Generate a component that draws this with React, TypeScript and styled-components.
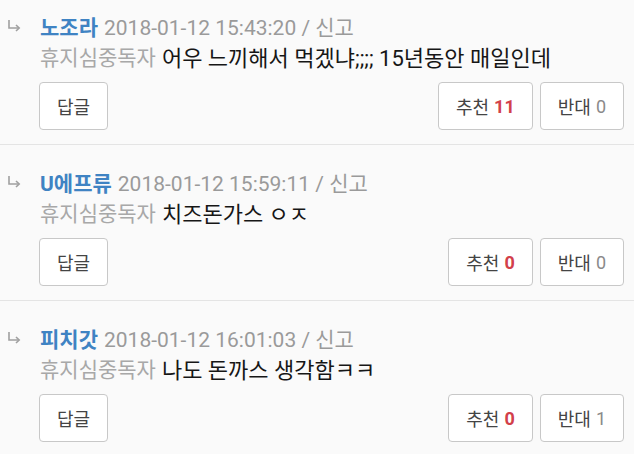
import React from 'react';
import styled, { createGlobalStyle } from 'styled-components';

type Comment = {
  id: number;
  nick: string;
  date: string;
  level: string;
  body: string;
  up: number;
  down: number;
};

const comments: Comment[] = [
  { id: 1, nick: '노조라', date: '2018-01-12 15:43:20', level: '휴지심중독자', body: '어우 느끼해서 먹겠냐;;;; 15년동안 매일인데', up: 11, down: 0 },
  { id: 2, nick: 'U에프류', date: '2018-01-12 15:59:11', level: '휴지심중독자', body: '치즈돈가스 ㅇㅈ', up: 0, down: 0 },
  { id: 3, nick: '피치갓', date: '2018-01-12 16:01:03', level: '휴지심중독자', body: '나도 돈까스 생각함ㅋㅋ', up: 0, down: 1 },
];

const GlobalStyle = createGlobalStyle`
  html, body {
    margin: 0;
    padding: 0;
    background: #fafafa;
    overflow: hidden;
  }
  body {
    font-family: Roboto, "Noto Sans CJK KR", "Noto Sans", sans-serif;
  }
`;

const List = styled.div`
  margin-top: -11px;
`;

const Item = styled.div`
  padding: 22px 10px 14px 0;
  border-bottom: 1px solid #e4e4e4;
`;

const Line = styled.div`
  display: flex;
  align-items: center;
  height: 30px;
  font-size: 21px;
  white-space: nowrap;
`;

const ArrowBox = styled.span`
  width: 40px;
  display: flex;
  align-items: center;
  padding-left: 7px;
  box-sizing: border-box;
`;

const Nick = styled.span`
  color: #3f83c3;
  font-weight: 700;
  margin-right: 6px;
`;

const Meta = styled.span`
  color: #9a9a9a;
`;

const Level = styled.span`
  color: #a8a8a8;
  margin-left: 40px;
  margin-right: 6px;
`;

const Body = styled.span`
  color: #161616;
  font-size: 22px;
`;

const Actions = styled.div`
  display: flex;
  align-items: center;
  justify-content: space-between;
  margin-top: 11px;
  padding-left: 39px;
`;

const Group = styled.div`
  display: flex;
  gap: 7px;
`;

const Btn = styled.button`
  height: 48px;
  padding: 0 17px;
  background: #ffffff;
  border: 1.5px solid #c8c8c8;
  border-radius: 4px;
  font-family: Roboto, "Noto Sans CJK KR", sans-serif;
  font-size: 18px;
  color: #444;
  display: flex;
  align-items: center;
  gap: 5px;
`;

const Count = styled.span<{ $hot?: boolean }>`
  color: ${p => (p.$hot ? '#d2404a' : '#8a8a8a')};
  font-weight: ${p => (p.$hot ? 700 : 400)};
`;

const ReplyArrow = () => (
  <svg width="15" height="12" viewBox="0 0 15 12" fill="none" stroke="#a0a0a0" strokeWidth="1.6">
    <path d="M2 0v8h10" />
    <path d="M9 5L12.2 8 9 11" />
  </svg>
);

export default function App() {
  return (
    <>
      <GlobalStyle />
      <List>
        {comments.map(c => (
          <Item key={c.id}>
            <Line>
              <ArrowBox><ReplyArrow /></ArrowBox>
              <Nick>{c.nick}</Nick>
              <Meta>{c.date} / 신고</Meta>
            </Line>
            <Line>
              <Level>{c.level}</Level>
              <Body>{c.body}</Body>
            </Line>
            <Actions>
              <Btn>답글</Btn>
              <Group>
                <Btn>추천 <Count $hot>{c.up}</Count></Btn>
                <Btn>반대 <Count>{c.down}</Count></Btn>
              </Group>
            </Actions>
          </Item>
        ))}
      </List>
    </>
  );
}
